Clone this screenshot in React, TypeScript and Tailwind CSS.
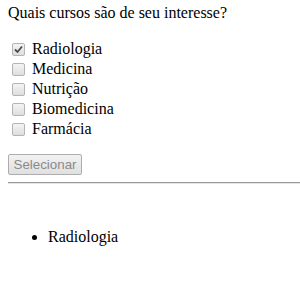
import React from 'react';

const cursos = ['Radiologia', 'Medicina', 'Nutrição', 'Biomedicina', 'Farmácia'];

const Box: React.FC<{ checked?: boolean }> = ({ checked }) => (
  <span className="mt-[1px] ml-[4px] mr-[7px] flex h-[13px] w-[13px] items-center justify-center rounded-[2px] border border-[#b4b4b4] bg-gradient-to-b from-[#f4f4f4] to-[#dedede]">
    {checked && (
      <svg width="9" height="9" viewBox="0 0 9 9">
        <path d="M1 4.5 L3.5 7 L8 1.5" fill="none" stroke="#4a4a4a" strokeWidth="1.8" />
      </svg>
    )}
  </span>
);

const App: React.FC = () => {
  return (
    <div className="min-h-[300px] bg-white pl-2 pt-[4px] text-[16px] leading-[18px] text-black" style={{ fontFamily: '"Liberation Serif", "Times New Roman", serif' }}>
      <p>Quais cursos são de seu interesse?</p>

      <div className="mt-[17px] flex flex-col">
        {cursos.map((c, i) => (
          <label key={c} className="flex h-[20px] items-center">
            <Box checked={i === 0} />
            <span>{c}</span>
          </label>
        ))}
      </div>

      <button
        disabled
        className="mt-[15px] h-[21px] w-[74px] rounded-[2px] border border-[#adadad] bg-gradient-to-b from-[#f2f2f2] to-[#e0e0e0] text-[13.33px] leading-none text-[#8a8a8a]"
        style={{ fontFamily: '"Liberation Sans", Arial, sans-serif' }}
      >
        Selecionar
      </button>

      <div className="mt-[7px] h-[2px] border-t border-b border-t-[#9a9a9a] border-b-[#e5e5e5]" />

      <ul className="mt-[44px] list-disc pl-[40px]">
        <li>Radiologia</li>
      </ul>
    </div>
  );
};

export default App;
